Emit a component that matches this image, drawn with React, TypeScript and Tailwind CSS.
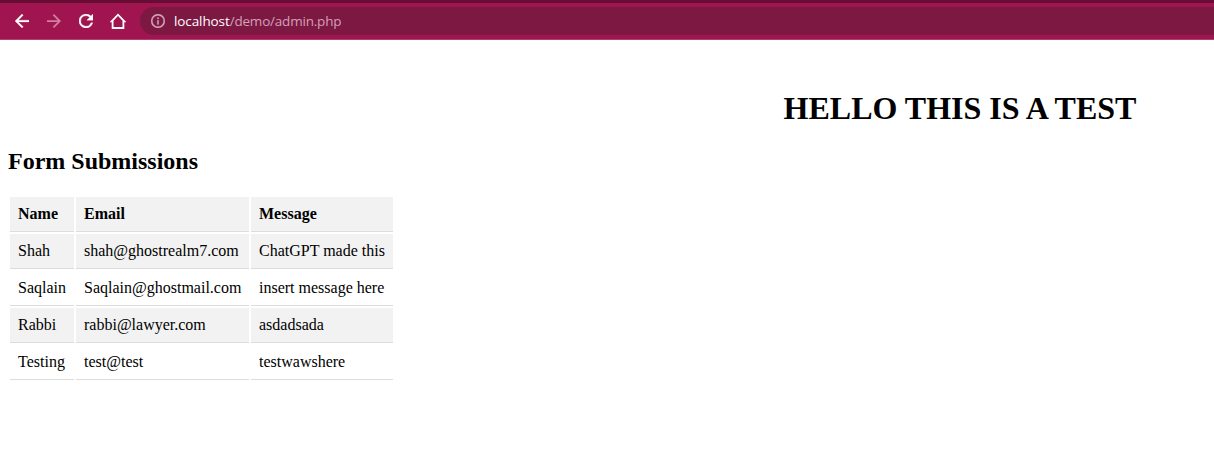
import React from "react";

const submissions = [
  { name: "Shah", email: "shah@ghostrealm7.com", message: "ChatGPT made this" },
  { name: "Saqlain", email: "Saqlain@ghostmail.com", message: "insert message here" },
  { name: "Rabbi", email: "rabbi@lawyer.com", message: "asdadsada" },
  { name: "Testing", email: "test@test", message: "testwawshere" },
];

function Toolbar() {
  return (
    <header className="h-10 border-t-[3px] border-b border-t-[#670d33] border-b-[#b04070] bg-[#a0154f] flex items-center pl-[15px]">
      <svg className="w-3.5 h-3.5 shrink-0" viewBox="4 4 16 16" fill="#fff" stroke="#fff" strokeWidth="0.3">
        <path d="M20 11H7.83l5.59-5.59L12 4l-8 8 8 8 1.41-1.41L7.83 13H20v-2z" />
      </svg>
      <svg className="w-3.5 h-3.5 shrink-0 ml-[18px]" viewBox="4 4 16 16" fill="#d17fa2">
        <path d="M12 4l-1.41 1.41L16.17 11H4v2h12.17l-5.58 5.59L12 20l8-8z" />
      </svg>
      <svg className="w-3.5 h-3.5 shrink-0 ml-[18px]" viewBox="4 4 16 16" fill="#fff" stroke="#fff" strokeWidth="0.4">
        <path d="M17.65 6.35A7.96 7.96 0 0 0 12 4a8 8 0 1 0 7.73 10h-2.08A6 6 0 1 1 12 6c1.66 0 3.14.69 4.22 1.78L13 11h7V4l-2.35 2.35z" />
      </svg>
      <svg className="w-4 h-4 shrink-0 ml-[17px]" viewBox="0 0 16 16" fill="none" stroke="#fff" strokeWidth="1.8">
        <path d="M2.600 8.300H1.700L8 1.700l6.300 6.600h-.9V15H2.600z" />
      </svg>
      <div className="flex-1 h-7 ml-3.5 rounded-l-full bg-[#7d1843] flex items-center pl-[11px]">
        <svg className="w-3.5 h-3.5 shrink-0" viewBox="2 2 20 20" fill="#d3a9bb" stroke="#d3a9bb" strokeWidth="0.3">
          <path d="M11 7h2v2h-2zm0 4h2v6h-2zm1-9a10 10 0 1 0 0 20 10 10 0 0 0 0-20zm0 18a8 8 0 1 1 0-16 8 8 0 0 1 0 16z" />
        </svg>
        <span className="ml-[9px] font-['Open_Sans',sans-serif] text-[13.5px] leading-5 tracking-[-0.2px] whitespace-nowrap text-[#d3a0b6]">
          <span className="text-white font-medium tracking-[-0.1px]">localhost</span>/demo/admin.php
        </span>
      </div>
    </header>
  );
}

export default function App() {
  const cell = "p-2 border-b border-[#ddd] text-left whitespace-nowrap";
  return (
    <div className="h-[457px] overflow-hidden bg-white text-black font-['Liberation_Serif',serif]">
      <Toolbar />
      <main className="w-[1920px] px-2 pt-[50px]">
        <h1 className="text-[32px] leading-9 font-bold text-center">HELLO THIS IS A TEST</h1>
        <h2 className="mt-[21px] text-2xl leading-7 font-bold">Form Submissions</h2>
        <table className="mt-5 table-fixed w-[387px] border-separate border-spacing-[2px] text-base leading-[18px]">
          <colgroup>
            <col className="w-16" />
            <col className="w-[173px]" />
            <col className="w-[142px]" />
          </colgroup>
          <thead>
            <tr className="bg-[#f2f2f2] font-bold">
              <th className={cell}>Name</th>
              <th className={cell}>Email</th>
              <th className={cell}>Message</th>
            </tr>
          </thead>
          <tbody>
            {submissions.map((s) => (
              <tr key={s.name} className="odd:bg-[#f2f2f2]">
                <td className={cell}>{s.name}</td>
                <td className={cell}>{s.email}</td>
                <td className={cell}>{s.message}</td>
              </tr>
            ))}
          </tbody>
        </table>
      </main>
    </div>
  );
}
